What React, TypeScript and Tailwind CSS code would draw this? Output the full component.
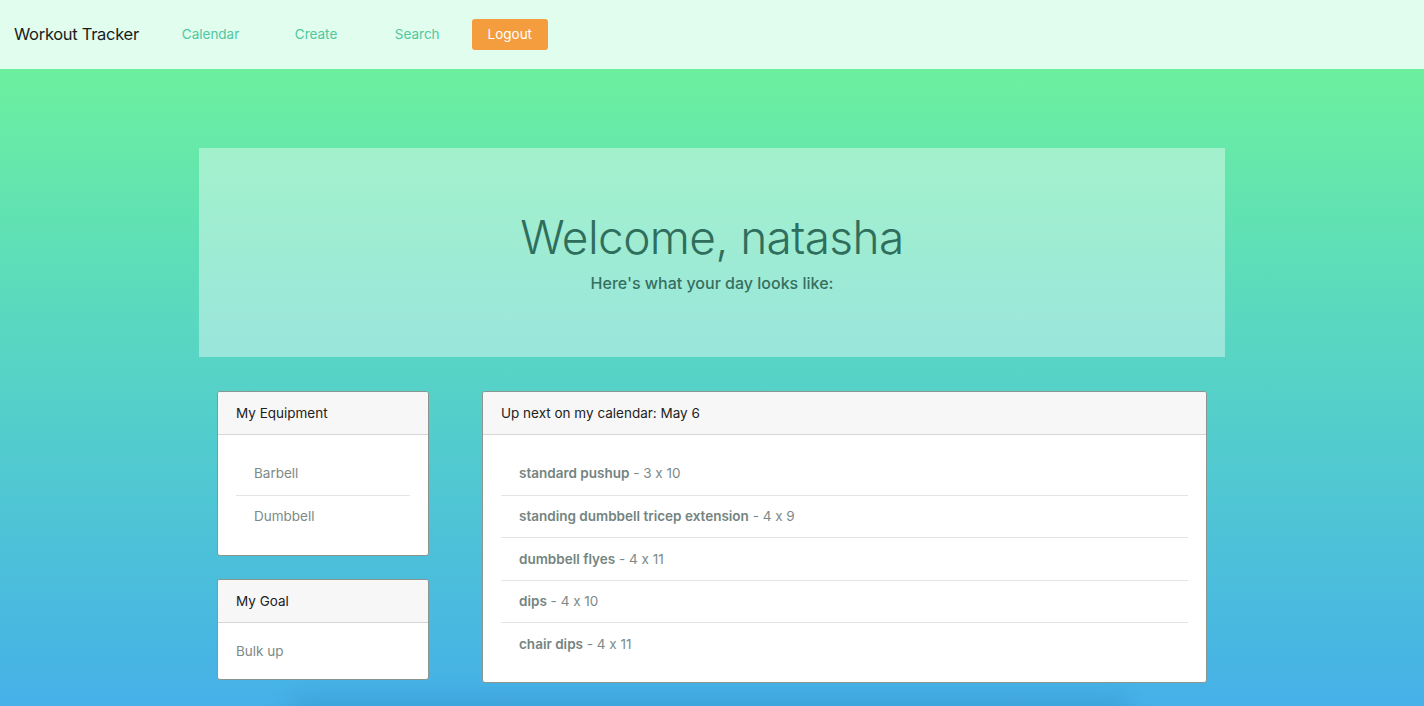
import React from "react"

const equipment = ["Barbell", "Dumbbell"]

const workouts = [
  { name: "standard pushup", sets: "3 x 10" },
  { name: "standing dumbbell tricep extension", sets: "4 x 9" },
  { name: "dumbbell flyes", sets: "4 x 11" },
  { name: "dips", sets: "4 x 10" },
  { name: "chair dips", sets: "4 x 11" },
]

function Card({ title, children, className }: { title: string; children: React.ReactNode; className?: string }) {
  return (
    <div className={"bg-white border border-[#8a9590] rounded-[3px] overflow-hidden " + (className ?? "")}>
      <div className="h-[43px] flex items-center px-[18px] bg-[#f7f7f7] border-b border-[#d6d6d6] text-[13.5px] text-[#222]">
        {title}
      </div>
      {children}
    </div>
  )
}

export default function App() {
  return (
    <div className="h-screen flex flex-col font-['Inter','Liberation_Sans',sans-serif] [font-feature-settings:'calt'_0] overflow-hidden">
      <nav className="h-[69px] shrink-0 bg-[#e0fdee] flex items-center pl-[14px]">
        <span className="text-[16.5px] text-[#1c1c1c] tracking-[-0.3px]">Workout Tracker</span>
        <div className="flex items-center ml-[43px] text-[13.5px] text-[#4fc89f]">
          <a className="w-[113px]">Calendar</a>
          <a className="w-[100px]">Create</a>
          <a className="w-[77px]">Search</a>
          <button className="h-[31px] w-[76px] rounded-[3px] bg-[#f49d3f] text-white text-[13.5px]">Logout</button>
        </div>
      </nav>

      <main className="flex-1 bg-linear-to-b from-[#6cf09e] to-[#46b0e8] flex flex-col items-center pt-[79px] relative">
        <section className="w-[1026px] h-[209px] bg-white/40 flex flex-col items-center justify-center pt-[4px] text-[#2f6e5c]">
          <h1 className="text-[46px] font-light leading-none tracking-[-0.6px]">Welcome, natasha</h1>
          <p className="text-[16px] font-medium mt-[11px] text-[#356f60]">Here's what your day looks like:</p>
        </section>

        <div className="w-[990px] flex gap-[53px] mt-[34px] z-10">
          <div className="w-[212px] flex flex-col gap-[23px]">
            <Card title="My Equipment">
              <ul className="px-[18px] pt-[17px] pb-[18px] text-[13.5px] text-[#7d8a87]">
                {equipment.map((item, i) => (
                  <li key={item} className={"h-[42.5px] flex items-center pl-[18px] " + (i > 0 ? "border-t border-[#e4e4e4]" : "")}>
                    {item}
                  </li>
                ))}
              </ul>
            </Card>
            <Card title="My Goal">
              <div className="h-[56px] flex items-center px-[18px] text-[13.5px] text-[#7d8a87]">Bulk up</div>
            </Card>
          </div>

          <Card title="Up next on my calendar: May 6" className="w-[725px] h-[292px]">
            <ul className="px-[18px] pt-[17px] text-[13.5px] text-[#7d8a87]">
              {workouts.map((w, i) => (
                <li key={w.name} className={"h-[42.5px] flex items-center pl-[18px] " + (i > 0 ? "border-t border-[#e4e4e4]" : "")}>
                  <span className="font-semibold text-[#748480]">{w.name}</span>
                  <span className="whitespace-pre"> - {w.sets}</span>
                </li>
              ))}
            </ul>
          </Card>
        </div>

        <div className="absolute left-[290px] top-[628px] w-[840px] h-[40px] rounded-[10px] bg-[#3a9bd2] blur-[12px] opacity-70"></div>
      </main>
    </div>
  )
}
